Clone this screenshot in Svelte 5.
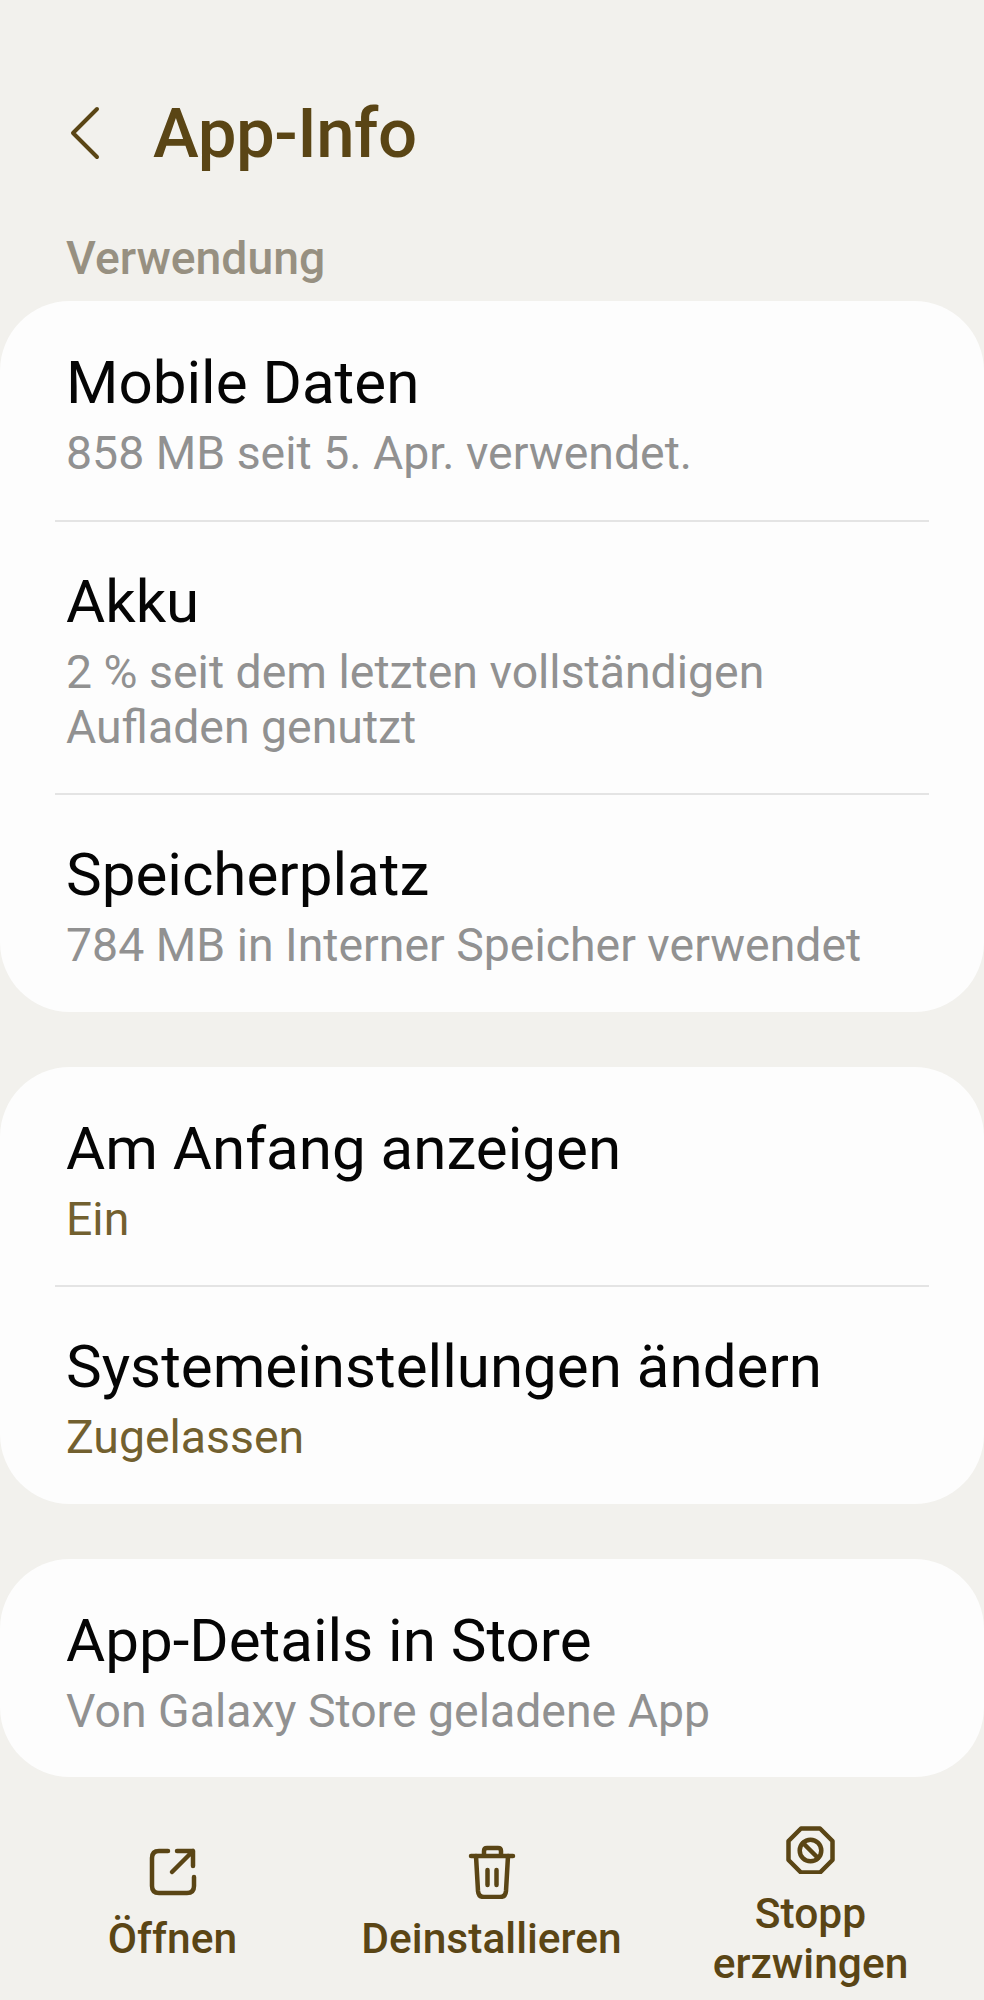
<script>
	const groups = [
		[
			{ title: "Mobile Daten", sub: "858 MB seit 5. Apr. verwendet." },
			{ title: "Akku", sub: "2 % seit dem letzten vollständigen Aufladen genutzt" },
			{ title: "Speicherplatz", sub: "784 MB in Interner Speicher verwendet" },
		],
		[
			{ title: "Am Anfang anzeigen", sub: "Ein", accent: true },
			{ title: "Systemeinstellungen ändern", sub: "Zugelassen", accent: true },
		],
		[{ title: "App-Details in Store", sub: "Von Galaxy Store geladene App" }],
	];
</script>

<div class="page">
	<header>
		<svg class="back" width="34" height="54" viewBox="0 0 34 54" fill="none">
			<path d="M28 3 L4 27 L28 51" />
		</svg>
		<h1>App-Info</h1>
	</header>

	<div class="section">Verwendung</div>

	<div class="cards">
		{#each groups as rows}
			<div class="card">
				{#each rows as row}
					<div class="row">
						<div class="title">{row.title}</div>
						<div class="sub" class:accent={row.accent}>{row.sub}</div>
					</div>
				{/each}
			</div>
		{/each}
	</div>

	<div class="actions">
		<div class="action">
			<svg width="60" height="54" viewBox="0 0 60 54" fill="none">
				<path d="M25 6 H16 Q9 6 9 13 V41 Q9 48 16 48 H44 Q51 48 51 41 V32" />
				<path d="M34 6 H50 V21 M50 6 L29 27" />
			</svg>
			<span>Öffnen</span>
		</div>
		<div class="action">
			<svg width="60" height="54" viewBox="0 0 60 54" fill="none">
				<path d="M9 11 H51 M22 11 V6 Q22 3 25 3 H36 Q39 3 39 6 V11" />
				<path d="M14 11 L16 46 Q16.5 52 22 52 H38 Q43.5 52 44 46 L46 11" />
				<path d="M25.5 25 V40 M34.5 25 V40" />
			</svg>
			<span>Deinstallieren</span>
		</div>
		<div class="action">
			<svg width="60" height="54" viewBox="0 -2 60 54" fill="none">
				<path d="M20 6.5 H39 L51.5 19 V38 L39 50.5 H20 L7.5 38 V19 Z" />
				<circle cx="29.5" cy="28.5" r="10.8" />
				<path d="M22 21 L37 36" />
			</svg>
			<span>Stopp<br />erzwingen</span>
		</div>
	</div>
</div>

<style>
	:global(body) {
		margin: 0;
		background: #f2f1ed;
	}

	.page {
		height: 2000px;
		overflow: hidden;
		font-family: Roboto, sans-serif;
		background: #f2f1ed;
	}

	header {
		display: flex;
		align-items: center;
		height: 80px;
		padding: 93px 0 0 69px;
	}

	.back {
		margin-right: 50px;
	}

	.back path {
		stroke: #5a4515;
		stroke-width: 4;
		stroke-linecap: round;
		stroke-linejoin: round;
	}

	h1 {
		margin: 0;
		font-size: 69px;
		font-weight: 500;
		letter-spacing: -0.5px;
		color: #5a4515;
	}

	.section {
		margin: 60px 0 0 66px;
		height: 68px;
		font-size: 46.3px;
		line-height: 50px;
		font-weight: 500;
		color: #979081;
	}

	.cards {
		display: flex;
		flex-direction: column;
		gap: 55px;
		margin-bottom: 22px;
	}

	.card {
		background: #fdfdfd;
		border-radius: 70px;
	}

	.row {
		position: relative;
		padding: 46px 66px 38.5px;
	}

	.row + .row::before {
		content: "";
		position: absolute;
		top: 0;
		left: 55px;
		right: 55px;
		height: 2px;
		background: #e4e4e4;
	}

	.title {
		font-size: 60.1px;
		line-height: 72px;
		color: #050505;
	}

	.sub {
		margin-top: 7px;
		font-size: 46.4px;
		line-height: 55px;
		color: #919191;
	}

	.sub.accent {
		color: #72602f;
	}

	.actions {
		display: grid;
		grid-template-columns: repeat(3, 319px);
		padding: 0 13px;
	}

	.action {
		display: flex;
		flex-direction: column;
		align-items: center;
		justify-content: center;
		height: 210px;
		color: #5a4515;
		font-size: 42.5px;
		line-height: 50px;
		font-weight: 500;
		text-align: center;
	}

	.action svg {
		margin-bottom: 15px;
	}

	.action svg path,
	.action svg circle {
		stroke: #5a4515;
		stroke-width: 4.5;
		stroke-linecap: round;
		stroke-linejoin: round;
	}
</style>
